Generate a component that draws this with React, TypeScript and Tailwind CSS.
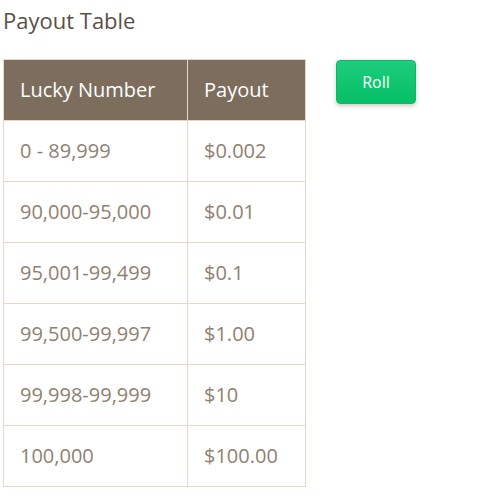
const rows = [
  ["0 - 89,999", "$0.002"],
  ["90,000-95,000", "$0.01"],
  ["95,001-99,499", "$0.1"],
  ["99,500-99,997", "$1.00"],
  ["99,998-99,999", "$10"],
  ["100,000", "$100.00"],
];

export default function App() {
  return (
    <div className="min-h-[500px] bg-white px-[3px] pt-[5px] font-['Open_Sans',sans-serif]">
      <h2 className="text-[22px] leading-[30px] text-[#5b4f45]">Payout Table</h2>
      <div className="mt-[24px] flex items-start">
        <table className="w-[303px] border-collapse text-[20px]">
          <thead>
            <tr className="bg-[#7c6d5d] text-white">
              <th className="h-[61px] w-[184px] border border-[#e6d8c4] px-4 text-left font-normal">
                Lucky Number
              </th>
              <th className="h-[61px] border border-[#e6d8c4] px-4 text-left font-normal">Payout</th>
            </tr>
          </thead>
          <tbody>
            {rows.map(([range, pay]) => (
              <tr key={range} className="text-[#8f8172]">
                <td className="h-[61px] border border-[#e6d8c4] px-4">{range}</td>
                <td className="h-[61px] border border-[#e6d8c4] px-4">{pay}</td>
              </tr>
            ))}
          </tbody>
        </table>
        <button className="ml-[30px] mt-px h-[44px] w-[80px] rounded-[4px] border border-[#0fb763] bg-gradient-to-b from-[#1ccd7c] to-[#04bf66] text-[16px] text-white shadow-[0_2px_4px_rgba(80,40,20,0.25)]">
          Roll
        </button>
      </div>
    </div>
  );
}
